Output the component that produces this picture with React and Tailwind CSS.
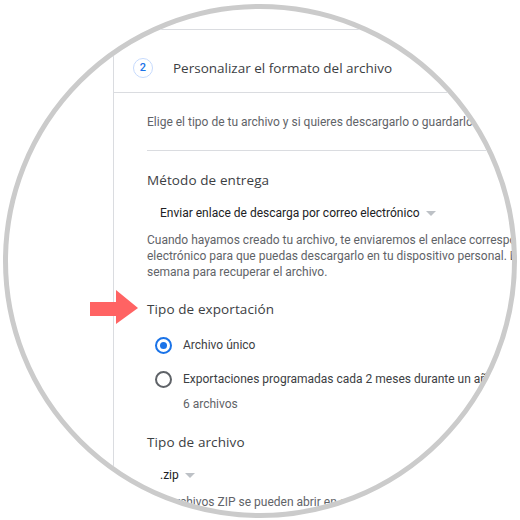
import React from "react";

const Caret = () => (
  <svg width="10" height="5" viewBox="0 0 10 5" className="ml-[6px] shrink-0">
    <path d="M0 0 L10 0 L5 5 Z" fill="#bdc1c6" />
  </svg>
);

export default function App() {
  const heading = "text-[13.5px] leading-[20px] text-[#3c4043] tracking-[0.1px]";
  const body = "text-[12px] leading-[16px] text-[#5f6368] whitespace-nowrap";
  const hf = { fontFamily: "'Open Sans', sans-serif" };
  return (
    <div className="w-[520px] h-[520px] bg-white overflow-hidden relative" style={{ fontFamily: "Roboto, 'Liberation Sans', sans-serif" }}>
      <div className="ml-[3px] mt-[4px] w-[514px] h-[514px] rounded-full border-[5px] border-[#cbcbcb] overflow-hidden bg-white">
        <div className="pl-[105px] pt-[20px]">
          <div className="border-l border-t border-[#dadce0] h-[600px]">
            <div className="h-[63px] pt-[28px] pl-[19px] border-b border-[#dadce0]">
              <div className="h-[20px] flex items-center">
                <div className="w-[20px] h-[20px] rounded-full border border-[#c6dafc] flex items-center justify-center text-[11px] font-medium text-[#1a73e8]">2</div>
                <div className="ml-[20px] text-[13.5px] leading-[20px] text-[#3c4043] whitespace-nowrap" style={hf}>Personalizar el formato del archivo</div>
              </div>
            </div>
            <div className="pl-[33px]">
              <div className="pt-[21px] pb-[20px] border-b border-[#dadce0]">
                <div className={body}>Elige el tipo de tu archivo y si quieres descargarlo o guardarlo en una ubicación</div>
              </div>
              <div className={`mt-[19px] ${heading} whitespace-nowrap`} style={hf}>Método de entrega</div>
              <div className="mt-[15px] ml-[13px] flex items-center text-[12px] leading-[16px] text-[#202124] whitespace-nowrap">
                Enviar enlace de descarga por correo electrónico
                <Caret />
              </div>
              <div className="mt-[11px] text-[12px] leading-[16px] text-[#5f6368] whitespace-nowrap">
                <div>Cuando hayamos creado tu archivo, te enviaremos el enlace correspondiente por correo</div>
                <div>electrónico para que puedas descargarlo en tu dispositivo personal. Dispondrás de una</div>
                <div>semana para recuperar el archivo.</div>
              </div>
              <div className={`mt-[19px] ${heading} whitespace-nowrap`} style={hf}>Tipo de exportación</div>
              <div className="mt-[16px] h-[20px] flex items-center">
                <div className="ml-[8px] w-[17px] h-[17px] rounded-full border-2 border-[#1a73e8] flex items-center justify-center">
                  <div className="w-[7px] h-[7px] rounded-full bg-[#1a73e8]" />
                </div>
                <div className="ml-[11px] text-[12px] text-[#3c4043] whitespace-nowrap">Archivo único</div>
              </div>
              <div className="mt-[14px] h-[20px] flex items-center">
                <div className="ml-[8px] w-[17px] h-[17px] rounded-full border-2 border-[#5f6368]" />
                <div className="ml-[11px] text-[12px] text-[#3c4043] whitespace-nowrap">Exportaciones programadas cada 2 meses durante un año</div>
              </div>
              <div className={`mt-[7px] ml-[36px] ${body}`}>6 archivos</div>
              <div className={`mt-[20px] ${heading} whitespace-nowrap`} style={hf}>Tipo de archivo</div>
              <div className="mt-[15px] ml-[13px] flex items-center text-[12px] leading-[16px] text-[#202124] whitespace-nowrap">
                .zip
                <Caret />
              </div>
              <div className={`mt-[11px] ${body}`}>Los archivos ZIP se pueden abrir en casi cualquier ordenador.</div>
            </div>
          </div>
        </div>
      </div>
      <svg className="absolute left-[90px] top-[290px]" width="48" height="34" viewBox="0 0 48 34">
        <path d="M0 12 L26 12 L26 0 L48 18 L26 34 L26 26 L0 26 Z" fill="#ff6363" />
      </svg>
    </div>
  );
}
